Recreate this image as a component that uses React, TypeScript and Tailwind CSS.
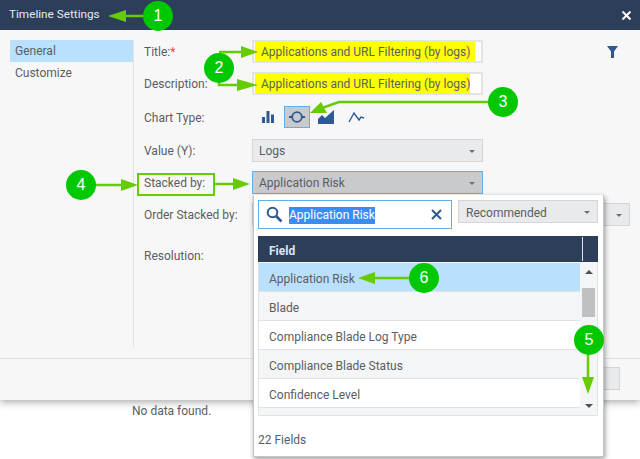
const font = 'font-["Roboto","Open_Sans",sans-serif]'

const rows = ['Blade', 'Compliance Blade Log Type', 'Compliance Blade Status', 'Confidence Level']

function Caret() {
  return <span className="h-0 w-0 border-x-[3px] border-t-[3px] border-x-transparent border-t-[#6b7078]" />
}

function Label({ children }: { children: React.ReactNode }) {
  return <div className="w-[108px] shrink-0 pt-[1px] text-[12px] leading-[16px] text-[#5a5e63]">{children}</div>
}

function Select({ text, active, className }: { text: string; active?: boolean; className: string }) {
  return (
    <div
      className={`flex h-[23px] items-center justify-between border pl-[6px] pr-[7px] pt-[1px] text-[12px] text-[#5a5e63] ${
        active ? 'border-[#5fb0ea] bg-[#c9cacc]' : 'border-[#d3d5d9] bg-[#e9eaec]'
      } ${className}`}
    >
      <span>{text}</span>
      <Caret />
    </div>
  )
}

function Highlighted({ width }: { width: string }) {
  return (
    <div className="flex h-[23px] w-[231px] items-center border-2 border-[#e2e3e6] bg-white pl-[1px]">
      <span className={`${width} flex h-[19px] items-center bg-[#ffff00] pl-[6px] pt-[1px] text-[12px] text-[#5a5e63] whitespace-nowrap`}>
        Applications and URL Filtering (by logs)
      </span>
    </div>
  )
}

function Badge({ n, className }: { n: number; className: string }) {
  return (
    <div
      className={`absolute flex h-[30px] w-[30px] items-center justify-center rounded-full bg-[#00c800] font-["Liberation_Sans",sans-serif] text-[16px] text-white ${className}`}
    >
      {n}
    </div>
  )
}

function Annotations() {
  const green = '#66cc00'
  return (
    <>
      <svg className="absolute left-0 top-0" width="640" height="459" fill="none">
        <g stroke={green} strokeWidth="2.5">
          <path d="M145 16H120" />
          <path d="M219 52H245" />
          <path d="M219 68V85H240" />
          <path d="M488 102H339L322 108" />
          <path d="M90 185H125" />
          <path d="M214 184H235" />
          <path d="M588 350V380" />
          <path d="M412 278H372" />
        </g>
        <g fill={green}>
          <path d="M108 16L126 10V22Z" />
          <path d="M258 52L241 46V58Z" />
          <path d="M258 85L237 79V91Z" />
          <path d="M310 113L321 102L327 113Z" />
          <path d="M138 185L121 179V191Z" />
          <path d="M250 184L233 178V190Z" />
          <path d="M588 394L582 377H594Z" />
          <path d="M358 278L375 272V284Z" />
        </g>
        <rect x="138" y="174" width="76" height="21" stroke={green} strokeWidth="2" />
      </svg>
      <Badge n={1} className="left-[143px] top-[1px]" />
      <Badge n={2} className="left-[204px] top-[53px]" />
      <Badge n={3} className="left-[488px] top-[87px]" />
      <Badge n={4} className="left-[66px] top-[170px]" />
      <Badge n={5} className="left-[574px] top-[325px]" />
      <Badge n={6} className="left-[409px] top-[263px]" />
    </>
  )
}

function FieldPopover() {
  return (
    <div className="absolute left-[253px] top-[195px] flex h-[262px] w-[351px] flex-col border-r border-b border-l border-[#c4c6c9] bg-white pl-[4px] pr-[5px] pt-[5px] shadow-[1px_2px_5px_rgba(0,0,0,0.4)]">
      <div className="flex items-start gap-[6px]">
        <div className="flex h-[29px] w-[194px] items-center border border-[#5fb0ea] bg-white pl-[7px] pr-[9px]">
          <svg width="17" height="17" viewBox="0 0 17 17" fill="none" stroke="#2d5a92" strokeWidth="2">
            <circle cx="6.5" cy="6.5" r="4.8" />
            <path d="M10 10l5.500 5.500" strokeWidth="2.6" />
          </svg>
          <span className="ml-[6px] mt-[1px] bg-[#3b8df5] text-[12px] leading-[17px] text-white">Application Risk</span>
          <svg className="ml-auto" width="11" height="11" viewBox="0 0 11 11" stroke="#2d5a92" strokeWidth="2">
            <path d="M1 1l9 9M10 1l-9 9" />
          </svg>
        </div>
        <Select text="Recommended" className="w-[140px] pl-[7px] pt-[2px]" />
      </div>
      <div className="mt-[7px] flex h-[26px] w-[340px] bg-[#2c3e58]">
        <div className="flex-1 pl-[11px] text-[12px] font-bold leading-[30px] text-[#dfe5ec]">Field</div>
        <div className="my-[1px] w-[16px] border-l border-[#dfe5ec]" />
      </div>
      <div className="flex h-[154px] w-[340px] border border-t-0 border-[#dfe3e8] bg-[#f4f5f7] pt-[1px]">
        <div className="flex-1">
          <div className="flex h-[29px] items-center border-b border-[#dfe3e8] bg-[#b9e0fc] pl-[10px] pt-[3px] text-[12px] text-[#5a5e63]">
            Application Risk
          </div>
          {rows.map((r, i) => (
            <div
              key={r}
              className={`flex h-[29px] items-center border-b border-[#dfe3e8] pl-[10px] pt-[3px] text-[12px] text-[#5a5e63] ${
                i % 2 === 0 ? 'bg-[#f4f5f7]' : 'bg-white'
              }`}
            >
              {r}
            </div>
          ))}
        </div>
        <div className="flex w-[17px] flex-col items-center bg-[#f4f5f7] pt-[7px]">
          <span className="h-0 w-0 border-x-[4px] border-b-[4px] border-x-transparent border-b-[#4c5157]" />
          <div className="mt-[14px] h-[29px] w-[13px] bg-[#c0c0c0]" />
          <span className="mt-auto mb-[7px] h-0 w-0 border-x-[4px] border-t-[4px] border-x-transparent border-t-[#4c5157]" />
        </div>
      </div>
      <div className="mt-[16px] text-[12px] leading-[16px] text-[#5a5e63]">22 Fields</div>
    </div>
  )
}

export default function App() {
  return (
    <div className={`relative h-[459px] w-[640px] overflow-hidden bg-white ${font}`}>
      <div className="flex h-[400px] flex-col bg-[#f7f7f7] shadow-[0_2px_8px_rgba(0,0,0,0.35)]">
        <div className="flex h-[30px] shrink-0 items-center justify-between bg-[#2c3e58] pl-[9px] pr-[9px]">
          <span className="text-[11.75px] text-[#e4e9ef]">Timeline Settings</span>
          <svg width="9" height="9" viewBox="0 0 9 9" stroke="white" strokeWidth="2">
            <path d="M0.5 0.5l8 8M8.5 0.5l-8 8" />
          </svg>
        </div>

        <div className="flex min-h-0 flex-1 py-[10px] pl-[10px]">
          <div className="w-[124px] shrink-0 border-r border-[#e2e3e6]">
            <div className="flex h-[22px] items-center bg-[#b9e0fc] pl-[5px] text-[12px] text-[#5a5e63]">General</div>
            <div className="flex h-[22px] items-center pl-[5px] text-[12px] text-[#5a5e63]">Customize</div>
          </div>

          <div className="flex flex-1 flex-col gap-[9px] pl-[10px]">
            <div className="flex items-center">
              <Label>
                Title:<span className="text-[#e5484d]">*</span>
              </Label>
              <Highlighted width="w-[220px]" />
              <svg className="ml-[124px]" width="11" height="12" viewBox="0 0 11 12" fill="#2d5a92">
                <path d="M0 0H11L7 5.500V12H4V5.500Z" />
              </svg>
            </div>
            <div className="flex items-center">
              <Label>Description:</Label>
              <Highlighted width="w-[215px]" />
            </div>
            <div className="my-[2px] flex h-[22px] items-center">
              <Label>Chart Type:</Label>
              <div className="ml-[10px] flex items-center">
                <svg width="12" height="12" viewBox="0 0 12 12" fill="#2d5a92">
                  <path d="M0 6h3v6H0zM4.500 0h3v12h-3zM9 3.500h3V12H9z" />
                </svg>
                <div className="ml-[10px] flex h-[22px] w-[26px] items-center justify-center border border-[#5fb0ea] bg-[#c9cacc]">
                  <svg width="16" height="12" viewBox="0 0 16 12" fill="none" stroke="#2d5a92" strokeWidth="1.8">
                    <circle cx="8" cy="6" r="4.800" />
                    <path d="M0 6h3M13 6h3" />
                  </svg>
                </div>
                <svg className="ml-[8px]" width="16" height="14" viewBox="0 0 16 14" fill="#2d5a92">
                  <path d="M0 14V9l4-4 3 3 9-8v14z" />
                </svg>
                <svg className="ml-[14px]" width="17" height="12" viewBox="0 0 17 12" fill="none" stroke="#2d5a92" strokeWidth="1.4">
                  <path d="M1 11L6 2l5 7 2-3 3 1" />
                </svg>
              </div>
            </div>
            <div className="flex items-center">
              <Label>Value (Y):</Label>
              <Select text="Logs" className="w-[231px]" />
            </div>
            <div className="flex items-center">
              <Label>Stacked by:</Label>
              <Select text="Application Risk" active className="w-[231px]" />
            </div>
            <div className="flex items-center">
              <Label>Order Stacked by:</Label>
              <Select text="" className="w-[378px]" />
            </div>
            <div className="mt-[12px] flex items-center">
              <Label>Resolution:</Label>
            </div>
          </div>
        </div>

        <div className="flex h-[42px] shrink-0 items-start justify-end border-t border-[#dfe3e8] pr-[20px] pt-[8px]">
          <div className="h-[23px] w-[60px] border border-[#d3d5d9] bg-[#e9eaec]" />
        </div>
      </div>

      <div className="pl-[132px] pt-[3px] text-[12px] leading-[16px] text-[#5a5e63]">No data found.</div>

      <FieldPopover />
      <Annotations />
    </div>
  )
}
